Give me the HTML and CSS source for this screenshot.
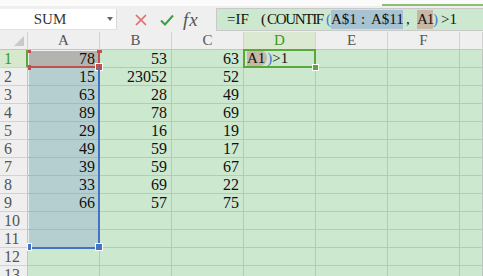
FILE: index.html
```html
<!DOCTYPE html>
<html>
<head>
<meta charset="utf-8">
<link rel="stylesheet" href="styles.css">
</head>
<body>
<div class="app">
  <div class="topstrip"><div class="tab-line"></div></div>
  <div class="toolbar">
    <div class="namebox"><span class="name">SUM</span><span class="caret"></span></div>
    <div class="icons">
      <svg class="ico-x" width="12" height="12" viewBox="0 0 12 12"><path d="M1 1L11 11M11 1L1 11" stroke="#e26a6a" stroke-width="1.7" fill="none"/></svg>
      <svg class="ico-ok" width="14" height="12" viewBox="0 0 14 12"><path d="M1 6.5L5 10.5L13 1.5" stroke="#3f9f3f" stroke-width="2" fill="none"/></svg>
      <span class="fx">fx</span>
    </div>
    <div class="formula"><span class="tk w24">=IF</span><span class="tk w16 fw-r">(</span><span class="tk w56 tight">COUNTIF</span><span class="tk w8 paren al-r">(</span><span class="hl-blue"><span class="tk w24">A$1</span><span class="tk w16 fw-c">:</span><span class="tk w32">A$11</span></span><span class="tk w14 fw-l">,</span><span class="tk w16 hl-tan snug">A1</span><span class="tk w8 paren al-l">)</span><span class="tk w16">&gt;1</span></div>
  </div>
  <div class="sheet">
    <div class="corner"><svg width="12" height="12" viewBox="0 0 12 12"><path d="M11 1L11 11L1 11Z" fill="#c9c9c9"/></svg></div>
    <div class="ch">A</div><div class="ch">B</div><div class="ch">C</div><div class="ch ch-active">D</div><div class="ch">E</div><div class="ch">F</div><div class="ch"></div>

    <div class="rh rh-active">1</div><div class="c sel ref">78</div><div class="c">53</div><div class="c">63</div><div class="c active"><span class="pill">A1</span><span class="paren">)</span>&gt;1</div><div class="c"></div><div class="c"></div><div class="c"></div>
    <div class="rh">2</div><div class="c sel">15</div><div class="c">23052</div><div class="c">52</div><div class="c"></div><div class="c"></div><div class="c"></div><div class="c"></div>
    <div class="rh">3</div><div class="c sel">63</div><div class="c">28</div><div class="c">49</div><div class="c"></div><div class="c"></div><div class="c"></div><div class="c"></div>
    <div class="rh">4</div><div class="c sel">89</div><div class="c">78</div><div class="c">69</div><div class="c"></div><div class="c"></div><div class="c"></div><div class="c"></div>
    <div class="rh">5</div><div class="c sel">29</div><div class="c">16</div><div class="c">19</div><div class="c"></div><div class="c"></div><div class="c"></div><div class="c"></div>
    <div class="rh">6</div><div class="c sel">49</div><div class="c">59</div><div class="c">17</div><div class="c"></div><div class="c"></div><div class="c"></div><div class="c"></div>
    <div class="rh">7</div><div class="c sel">39</div><div class="c">59</div><div class="c">67</div><div class="c"></div><div class="c"></div><div class="c"></div><div class="c"></div>
    <div class="rh">8</div><div class="c sel">33</div><div class="c">69</div><div class="c">22</div><div class="c"></div><div class="c"></div><div class="c"></div><div class="c"></div>
    <div class="rh">9</div><div class="c sel">66</div><div class="c">57</div><div class="c">75</div><div class="c"></div><div class="c"></div><div class="c"></div><div class="c"></div>
    <div class="rh">10</div><div class="c sel"></div><div class="c"></div><div class="c"></div><div class="c"></div><div class="c"></div><div class="c"></div><div class="c"></div>
    <div class="rh">11</div><div class="c sel"></div><div class="c"></div><div class="c"></div><div class="c"></div><div class="c"></div><div class="c"></div><div class="c"></div>
    <div class="rh">12</div><div class="c"></div><div class="c"></div><div class="c"></div><div class="c"></div><div class="c"></div><div class="c"></div><div class="c"></div>
    <div class="rh">13</div><div class="c"></div><div class="c"></div><div class="c"></div><div class="c"></div><div class="c"></div><div class="c"></div><div class="c"></div>

    <div class="ref-box"></div>
    <div class="h red h-tl"></div>
    <div class="h red h-tr"></div>
    <div class="h red h-bl"></div>
    <div class="h red h-br"></div>
    <div class="blue-right"></div>
    <div class="blue-bottom"></div>
    <div class="h blue h-bbl"></div>
    <div class="h blue h-bbr"></div>
    <div class="act-box"></div>
    <div class="h green h-act"></div>
  </div>
</div>
</body>
</html>
```
FILE: styles.css
```css
html, body {
  margin: 0;
  padding: 0;
  width: 483px;
  height: 276px;
  overflow: hidden;
  background: #f0f0f0;
}
.app {
  width: 483px;
  height: 276px;
  font-family: "Liberation Serif", "DejaVu Serif", serif;
  font-size: 16px;
  color: #111;
}
.topstrip {
  height: 6px;
  background: #fbfbfb;
  position: relative;
}
.tab-line {
  position: absolute;
  left: 382px;
  right: 0;
  top: 4px;
  height: 2px;
  background: #8cbf72;
}
.toolbar {
  height: 26px;
  display: flex;
  align-items: flex-start;
  background: #efefef;
}
.namebox {
  margin-top: 3px;
  width: 117px;
  height: 21px;
  background: #fff;
  border-right: 1px solid #d9d9d9;
  border-bottom: 1px solid #e2e2e2;
  box-sizing: border-box;
  display: flex;
  align-items: center;
}
.name {
  width: 100px;
  text-align: center;
  color: #333;
  font-family: "Liberation Serif", serif;
  font-size: 15px;
}
.caret {
  margin-left: 7px;
  width: 0;
  height: 0;
  border-left: 3px solid transparent;
  border-right: 3px solid transparent;
  border-top: 4px solid #666;
}
.icons {
  width: 99px;
  height: 24px;
  display: flex;
  align-items: center;
  padding-left: 18px;
  box-sizing: border-box;
  margin-top: 2px;
}
.ico-x { margin-right: 13px; }
.ico-ok { margin-right: 9px; }
.fx {
  font-family: "Liberation Serif", serif;
  font-style: italic;
  font-size: 19px;
  letter-spacing: 1px;
  color: #555;
  line-height: 20px;
}
.formula {
  margin-top: 2px;
  flex: 1;
  height: 23px;
  box-sizing: border-box;
  background: #cce8cf;
  border: 1px solid #c9c9c9;
  border-right: none;
  padding-left: 10px;
  display: flex;
  align-items: center;
  white-space: pre;
  color: #111;
  font-size: 15px;
}
.tk {
  display: inline-block;
  white-space: nowrap;
  line-height: 19px;
}
.w8 { width: 8px; }
.w14 { width: 14px; }
.w16 { width: 16px; }
.w24 { width: 24px; }
.w32 { width: 32px; }
.w56 { width: 56px; }
.tight { letter-spacing: -1.3px; }
.snug { letter-spacing: -1px; }
.al-r { text-align: right; }
.al-l { text-align: left; }
.fw-r { text-align: right; padding-right: 1px; box-sizing: border-box; }
.fw-l { text-align: left; padding-left: 3px; box-sizing: border-box; }
.fw-c { text-align: center; }
.paren { color: #4a74d8; }
.hl-blue {
  display: inline-flex;
  background: #a7c3d2;
}
.hl-tan {
  background: #c7b7a5;
}
.sheet {
  position: relative;
  display: grid;
  grid-template-columns: 28px repeat(6, 72px) 1fr;
  grid-auto-rows: 18px;
}
.corner {
  background: #efefef;
  border-right: 1px solid #d2d2d2;
  border-bottom: 1px solid #c4c4c4;
  box-sizing: border-box;
  display: flex;
  align-items: flex-end;
  justify-content: flex-end;
  padding: 0 2px 2px 0;
}
.ch {
  background: #efefef;
  border-right: 1px solid #d2d2d2;
  border-bottom: 1px solid #c4c4c4;
  box-sizing: border-box;
  text-align: center;
  line-height: 17px;
  font-size: 15px;
  color: #555;
}
.ch-active {
  background: #dbe8d2;
  color: #3c9a1e;
}
.rh {
  background: #efefef;
  border-right: 1px solid #c4c4c4;
  border-bottom: 1px solid #d2d2d2;
  box-sizing: border-box;
  padding-left: 4px;
  line-height: 17px;
  color: #555;
}
.rh-active {
  background: #d6e9cc;
  color: #3c9a1e;
  border-right: 2px solid #5aa83a;
}
.c {
  background: #cce8cf;
  border-right: 1px solid #c0c4c0;
  border-bottom: 1px solid #c0c4c0;
  box-sizing: border-box;
  text-align: right;
  padding-right: 4px;
  line-height: 17px;
  white-space: nowrap;
  overflow: hidden;
}
.c.sel {
  background: #b5cfd0;
  border-bottom-color: #a9b6c6;
  box-shadow: inset 1px 0 #e6eeee;
}
.c.ref { background: #b3b3b0; }
.c.active {
  text-align: left;
  padding-left: 3px;
  padding-right: 0;
  font-size: 15px;
}
.pill {
  background: #c7b7a5;
  border-radius: 0 8px 8px 0;
  padding-right: 2px;
  display: inline-block;
  line-height: 16px;
}
.ref-box {
  position: absolute;
  left: 28px;
  top: 18px;
  width: 72px;
  height: 18px;
  box-sizing: border-box;
  border-top: 1px solid #f2f2f2;
  border-right: 2px solid #c0504d;
  border-bottom: 2px solid #c0504d;
}
.h { position: absolute; box-sizing: border-box; }
.red { background: #c0504d; }
.blue { background: #4472c4; }
.green { background: #5aa83a; }
.h-tl { left: 28px; top: 18px; width: 3px; height: 3px; }
.h-tr { left: 97px; top: 18px; width: 5px; height: 3px; }
.h-bl { left: 28px; top: 33px; width: 3px; height: 5px; }
.h-br { left: 96px; top: 32px; width: 6px; height: 6px; outline: 1px solid #fff; }
.blue-right {
  position: absolute;
  left: 98px;
  top: 36px;
  width: 2px;
  height: 181px;
  background: #4472c4;
}
.blue-bottom {
  position: absolute;
  left: 28px;
  top: 215px;
  width: 72px;
  height: 2px;
  background: #4472c4;
}
.h-bbl { left: 28px; top: 212px; width: 3px; height: 6px; outline: 1px solid #fff; }
.h-bbr { left: 96px; top: 212px; width: 6px; height: 6px; outline: 1px solid #fff; }
.act-box {
  position: absolute;
  left: 243px;
  top: 17px;
  width: 73px;
  height: 19px;
  box-sizing: border-box;
  border: 2px solid #5aa83a;
}
.h-act { left: 313px; top: 33px; width: 5px; height: 5px; outline: 1px solid #fff; }
```
